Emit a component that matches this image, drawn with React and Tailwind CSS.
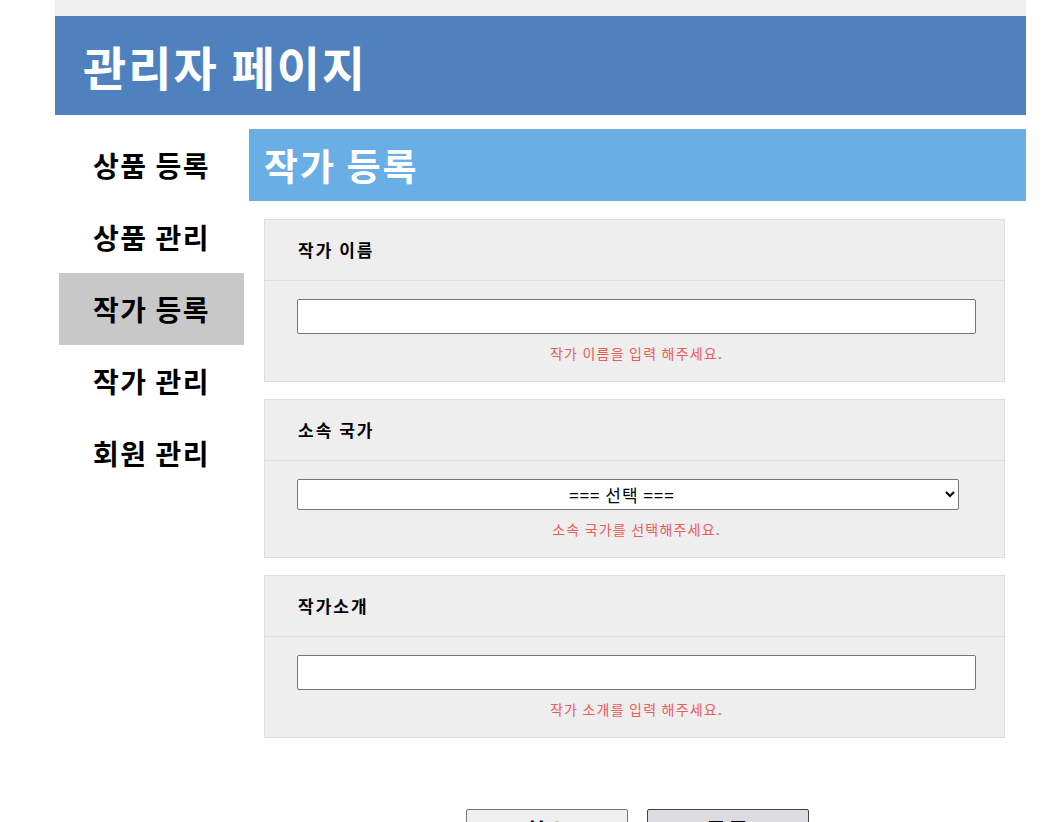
import React from "react";

const menu = ["상품 등록", "상품 관리", "작가 등록", "작가 관리", "회원 관리"];

const Field = ({ label, children, error }) => (
  <div className="bg-[#eeeeee] border border-[#dddddd]">
    <div className="h-[61px] flex items-center pl-[33px] border-b border-[#dddddd]">
      <span className="text-[17px] font-bold tracking-[2px] text-black">{label}</span>
    </div>
    <div className="pt-[18px] pb-[18px] pl-[32px] pr-[28px]">
      {children}
      <p className="mt-[9px] text-center text-[14px] tracking-[1.2px] leading-[20px] text-[#e85c5c]">{error}</p>
    </div>
  </div>
);

export default function App() {
  return (
    <div className="min-h-screen bg-white" style={{ fontFamily: '"Noto Sans CJK KR", "Noto Sans", sans-serif' }}>
      <div className="ml-[55px] w-[971px]">
        {/* top strip */}
        <div className="h-[16px] bg-[#efefef]" />

        {/* header */}
        <header className="h-[99px] bg-[#4f81be] flex items-center pl-[28px]">
          <h1 className="text-[47px] font-bold tracking-[2px] text-white leading-none">관리자 페이지</h1>
        </header>

        <div className="flex mt-[14px]">
          {/* sidebar */}
          <nav className="ml-[4px] w-[185px] flex flex-col">
            {menu.map((m) => (
              <div
                key={m}
                className={`h-[72px] flex items-center justify-center text-[28px] font-bold tracking-[1.5px] text-black ${
                  m === "작가 등록" ? "bg-[#c8c8c8]" : ""
                }`}
              >
                {m}
              </div>
            ))}
          </nav>

          {/* main */}
          <main className="ml-[5px] flex-1">
            <div className="h-[72px] bg-[#69aee5] flex items-center pl-[15px]">
              <h2 className="text-[37px] font-bold tracking-[2px] text-white leading-none">작가 등록</h2>
            </div>

            <div className="ml-[15px] mr-[21px] mt-[18px] flex flex-col gap-[17px]">
              <Field label="작가 이름" error="작가 이름을 입력 해주세요.">
                <input type="text" className="block w-full h-[35px] bg-white border border-[#767676] rounded-[2px]" />
              </Field>
              <Field label="소속 국가" error="소속 국가를 선택해주세요.">
                <select className="block w-[662px] h-[31px] bg-white border border-[#767676] rounded-[2px] text-center text-[17px] tracking-[1px] text-black">
                  <option>=== 선택 ===</option>
                </select>
              </Field>
              <Field label="작가소개" error="작가 소개를 입력 해주세요.">
                <input type="text" className="block w-full h-[35px] bg-white border border-[#767676] rounded-[2px]" />
              </Field>
            </div>

            <div className="mt-[71px] flex justify-center gap-[19px]">
              <button className="w-[162px] h-[40px] bg-[#efefef] border border-[#767676] rounded-[2px] text-[22px] font-bold tracking-[2px] text-black">
                취소
              </button>
              <button className="w-[162px] h-[40px] bg-[#dcdce0] border border-[#444444] rounded-[2px] text-[22px] font-bold tracking-[2px] text-black">
                등록
              </button>
            </div>
          </main>
        </div>
      </div>
    </div>
  );
}
